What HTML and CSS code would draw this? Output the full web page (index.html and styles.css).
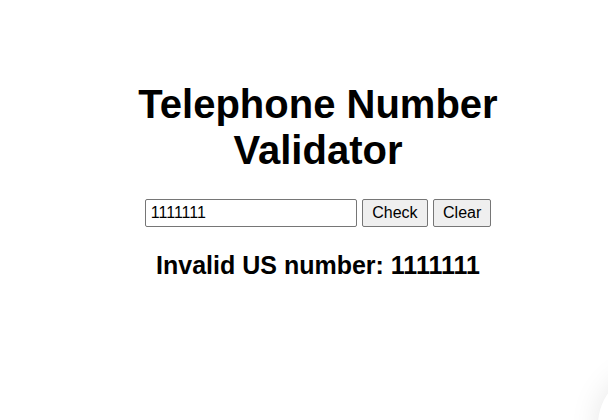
FILE: index.html
```html
<!DOCTYPE html>
<html>
<head lang="en">
    <meta charset="UTF-8">
    <title>Telephone Number Validator</title>
    <link rel="stylesheet" href="styles.css">
</head>
<body>
<div class="g-main">
    <h1 class="m-title">Telephone Number<br>Validator</h1>
    <div class="m-form">
        <input id="user-input" class="u-input" type="text" value="1111111">
        <button id="check-btn" class="u-btn">Check</button>
        <button id="clear-btn" class="u-btn">Clear</button>
    </div>
    <h2 id="results-div" class="m-result">Invalid US number: 1111111</h2>
</div>
<div class="m-fab"></div>
</body>
</html>
```

FILE: styles.css
```css
* {
    margin: 0;
    padding: 0;
}
body {
    font-family: "Liberation Sans", Arial, sans-serif;
    background-color: #fff;
    color: #000;
}
.g-main {
    padding-top: 81px;
    padding-left: 28px;
    text-align: center;
}
.m-title {
    font-size: 40px;
    line-height: 46px;
    font-weight: bold;
}
.m-form {
    margin-top: 26px;
}
.u-input {
    width: 212px;
    height: 28px;
    padding: 1px 5px;
    box-sizing: border-box;
    font-family: "Liberation Sans", Arial, sans-serif;
    font-size: 16px;
    border: 1px solid #767676;
    border-radius: 2px;
    vertical-align: middle;
}
.u-btn {
    height: 28px;
    padding: 0 9px;
    margin-left: 1px;
    font-family: "Liberation Sans", Arial, sans-serif;
    font-size: 16px;
    background-color: #efefef;
    border: 1px solid #767676;
    border-radius: 2px;
    vertical-align: middle;
}
.m-result {
    margin-top: 24px;
    font-size: 25px;
    font-weight: bold;
}
.m-fab {
    position: fixed;
    right: -100px;
    bottom: -60px;
    width: 110px;
    height: 110px;
    border-radius: 50%;
    background-color: #fff;
    box-shadow: 0 0 30px rgba(0, 0, 0, 0.1);
}
```
